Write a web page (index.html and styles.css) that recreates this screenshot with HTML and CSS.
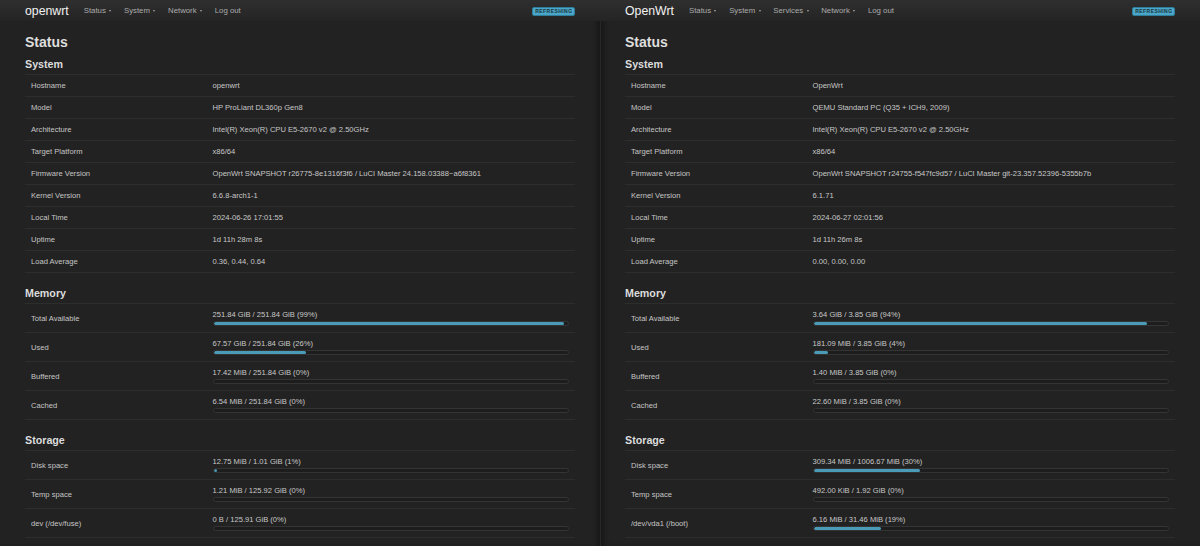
FILE: index.html
```html
<!DOCTYPE html>
<html lang="en">
<head>
<meta charset="utf-8">
<title>OpenWrt Status</title>
<link rel="stylesheet" href="styles.css">
</head>
<body>
<div class="screens">
  <section class="panel panel-left">
    <header class="topbar">
      <span class="brand">openwrt</span>
      <nav class="nav">
        <span class="nav-item">Status<i class="caret"></i></span>
        <span class="nav-item">System<i class="caret"></i></span>
        <span class="nav-item">Network<i class="caret"></i></span>
        <span class="nav-item">Log out</span>
      </nav>
      <span class="badge">REFRESHING</span>
    </header>
    <main class="container">
      <h2 class="page-title">Status</h2>
      <div class="section">
        <h3 class="section-title">System</h3>
        <div class="table">
          <div class="row"><div class="cell label">Hostname</div><div class="cell">openwrt</div></div>
          <div class="row"><div class="cell label">Model</div><div class="cell">HP ProLiant DL360p Gen8</div></div>
          <div class="row"><div class="cell label">Architecture</div><div class="cell">Intel(R) Xeon(R) CPU E5-2670 v2 @ 2.50GHz</div></div>
          <div class="row"><div class="cell label">Target Platform</div><div class="cell">x86/64</div></div>
          <div class="row"><div class="cell label">Firmware Version</div><div class="cell">OpenWrt SNAPSHOT r26775-8e1316f3f6 / LuCI Master 24.158.03388~a6f8361</div></div>
          <div class="row"><div class="cell label">Kernel Version</div><div class="cell">6.6.8-arch1-1</div></div>
          <div class="row"><div class="cell label">Local Time</div><div class="cell">2024-06-26 17:01:55</div></div>
          <div class="row"><div class="cell label">Uptime</div><div class="cell">1d 11h 28m 8s</div></div>
          <div class="row"><div class="cell label">Load Average</div><div class="cell">0.36, 0.44, 0.64</div></div>
        </div>
      </div>
      <div class="section">
        <h3 class="section-title">Memory</h3>
        <div class="table">
          <div class="row row-tall"><div class="cell label">Total Available</div><div class="cell meter"><span class="meter-text">251.84 GiB / 251.84 GiB (99%)</span><div class="bar"><div class="fill" style="width:99%"></div></div></div></div>
          <div class="row row-tall"><div class="cell label">Used</div><div class="cell meter"><span class="meter-text">67.57 GiB / 251.84 GiB (26%)</span><div class="bar"><div class="fill" style="width:26%"></div></div></div></div>
          <div class="row row-tall"><div class="cell label">Buffered</div><div class="cell meter"><span class="meter-text">17.42 MiB / 251.84 GiB (0%)</span><div class="bar"><div class="fill" style="width:0%"></div></div></div></div>
          <div class="row row-tall"><div class="cell label">Cached</div><div class="cell meter"><span class="meter-text">6.54 MiB / 251.84 GiB (0%)</span><div class="bar"><div class="fill" style="width:0%"></div></div></div></div>
        </div>
      </div>
      <div class="section">
        <h3 class="section-title">Storage</h3>
        <div class="table">
          <div class="row row-tall"><div class="cell label">Disk space</div><div class="cell meter"><span class="meter-text">12.75 MiB / 1.01 GiB (1%)</span><div class="bar"><div class="fill" style="width:1%"></div></div></div></div>
          <div class="row row-tall"><div class="cell label">Temp space</div><div class="cell meter"><span class="meter-text">1.21 MiB / 125.92 GiB (0%)</span><div class="bar"><div class="fill" style="width:0%"></div></div></div></div>
          <div class="row row-tall"><div class="cell label">dev (/dev/fuse)</div><div class="cell meter"><span class="meter-text">0 B / 125.91 GiB (0%)</span><div class="bar"><div class="fill" style="width:0%"></div></div></div></div>
        </div>
      </div>
    </main>
  </section>

  <section class="panel panel-right">
    <header class="topbar">
      <span class="brand">OpenWrt</span>
      <nav class="nav">
        <span class="nav-item">Status<i class="caret"></i></span>
        <span class="nav-item">System<i class="caret"></i></span>
        <span class="nav-item">Services<i class="caret"></i></span>
        <span class="nav-item">Network<i class="caret"></i></span>
        <span class="nav-item">Log out</span>
      </nav>
      <span class="badge">REFRESHING</span>
    </header>
    <main class="container">
      <h2 class="page-title">Status</h2>
      <div class="section">
        <h3 class="section-title">System</h3>
        <div class="table">
          <div class="row"><div class="cell label">Hostname</div><div class="cell">OpenWrt</div></div>
          <div class="row"><div class="cell label">Model</div><div class="cell">QEMU Standard PC (Q35 + ICH9, 2009)</div></div>
          <div class="row"><div class="cell label">Architecture</div><div class="cell">Intel(R) Xeon(R) CPU E5-2670 v2 @ 2.50GHz</div></div>
          <div class="row"><div class="cell label">Target Platform</div><div class="cell">x86/64</div></div>
          <div class="row"><div class="cell label">Firmware Version</div><div class="cell">OpenWrt SNAPSHOT r24755-f547fc9d57 / LuCI Master git-23.357.52396-5355b7b</div></div>
          <div class="row"><div class="cell label">Kernel Version</div><div class="cell">6.1.71</div></div>
          <div class="row"><div class="cell label">Local Time</div><div class="cell">2024-06-27 02:01:56</div></div>
          <div class="row"><div class="cell label">Uptime</div><div class="cell">1d 11h 26m 8s</div></div>
          <div class="row"><div class="cell label">Load Average</div><div class="cell">0.00, 0.00, 0.00</div></div>
        </div>
      </div>
      <div class="section">
        <h3 class="section-title">Memory</h3>
        <div class="table">
          <div class="row row-tall"><div class="cell label">Total Available</div><div class="cell meter"><span class="meter-text">3.64 GiB / 3.85 GiB (94%)</span><div class="bar"><div class="fill" style="width:94%"></div></div></div></div>
          <div class="row row-tall"><div class="cell label">Used</div><div class="cell meter"><span class="meter-text">181.09 MiB / 3.85 GiB (4%)</span><div class="bar"><div class="fill" style="width:4%"></div></div></div></div>
          <div class="row row-tall"><div class="cell label">Buffered</div><div class="cell meter"><span class="meter-text">1.40 MiB / 3.85 GiB (0%)</span><div class="bar"><div class="fill" style="width:0%"></div></div></div></div>
          <div class="row row-tall"><div class="cell label">Cached</div><div class="cell meter"><span class="meter-text">22.60 MiB / 3.85 GiB (0%)</span><div class="bar"><div class="fill" style="width:0%"></div></div></div></div>
        </div>
      </div>
      <div class="section">
        <h3 class="section-title">Storage</h3>
        <div class="table">
          <div class="row row-tall"><div class="cell label">Disk space</div><div class="cell meter"><span class="meter-text">309.34 MiB / 1006.67 MiB (30%)</span><div class="bar"><div class="fill" style="width:30%"></div></div></div></div>
          <div class="row row-tall"><div class="cell label">Temp space</div><div class="cell meter"><span class="meter-text">492.00 KiB / 1.92 GiB (0%)</span><div class="bar"><div class="fill" style="width:0%"></div></div></div></div>
          <div class="row row-tall"><div class="cell label">/dev/vda1 (/boot)</div><div class="cell meter"><span class="meter-text">6.16 MiB / 31.46 MiB (19%)</span><div class="bar"><div class="fill" style="width:19%"></div></div></div></div>
        </div>
      </div>
    </main>
  </section>
</div>
</body>
</html>
```

FILE: styles.css
```css
* { box-sizing: border-box; }

html, body {
  margin: 0;
  padding: 0;
  height: 100%;
  background: #222222;
  overflow: hidden;
}

body {
  font-family: "Liberation Sans", Arial, Helvetica, sans-serif;
  color: #c8c8c8;
}

.screens {
  display: flex;
  width: 1200px;
  height: 546px;
}

.panel {
  width: 600px;
  flex: 0 0 600px;
  height: 100%;
  background: #222222;
  overflow: hidden;
}

.panel-left {
  box-shadow: inset -2px 0 0 #191919, inset -5px 0 4px -2px rgba(0, 0, 0, 0.3);
}

.panel-right {
  box-shadow: inset 1px 0 0 #282828, inset 6px 0 6px -3px rgba(0, 0, 0, 0.4);
}

/* ---------- top bar ---------- */
.topbar {
  height: 21px;
  display: flex;
  align-items: center;
  padding: 0 25px;
  background: linear-gradient(#2f2f2f, #242424);
}

.brand {
  font-size: 12.3px;
  color: #f2f2f2;
  margin-right: 15px;
}

.nav {
  display: flex;
  align-items: center;
  gap: 12.7px;
  flex: 1;
}

.nav-item {
  font-size: 7.8px;
  color: #ababab;
  display: flex;
  align-items: center;
}

.caret {
  display: inline-block;
  width: 0;
  height: 0;
  margin-left: 3.4px;
  border-left: 1.8px solid transparent;
  border-right: 1.8px solid transparent;
  border-top: 2px solid #a3a3a3;
}

.badge {
  font-size: 5px;
  font-weight: bold;
  letter-spacing: 0.45px;
  color: #1d3440;
  background: #4aa6c8;
  border: 1px solid #2f7c9b;
  border-radius: 2px;
  height: 9px;
  line-height: 7px;
  padding: 0 1.5px 0 2px;
  margin-top: 1px;
}

/* ---------- content ---------- */
.container {
  margin: 0 25px;
}

.page-title {
  margin: 13px 0 0;
  font-size: 14px;
  line-height: 17px;
  font-weight: bold;
  color: #dedede;
}

.section + .section {
  margin-top: 14px;
}

.section-title {
  margin: 7px 0 3px;
  font-size: 10.7px;
  line-height: 13px;
  font-weight: bold;
  color: #dcdcdc;
}

.table {
  border-bottom: 1px solid #2d2d2d;
}

.row {
  display: grid;
  grid-template-columns: 33% 1fr;
  height: 22px;
  border-top: 1px solid #2d2d2d;
  align-items: center;
}

.row-tall {
  height: 29px;
}

.cell {
  padding: 0 6px;
  font-size: 7.6px;
  line-height: 9px;
  white-space: nowrap;
  color: #c8c8c8;
}

.label {
  color: #c6c6c6;
}

.meter {
  display: flex;
  flex-direction: column;
  padding-top: 1px;
}

.meter-text {
  line-height: 8px;
}

.bar {
  margin-top: 1.5px;
  height: 5.5px;
  border: 1px solid #343434;
  background: #1d1d1d;
  border-radius: 3px;
  overflow: hidden;
}

.fill {
  height: 100%;
  background: #4a9bb8;
  border-radius: 2px;
}
```
